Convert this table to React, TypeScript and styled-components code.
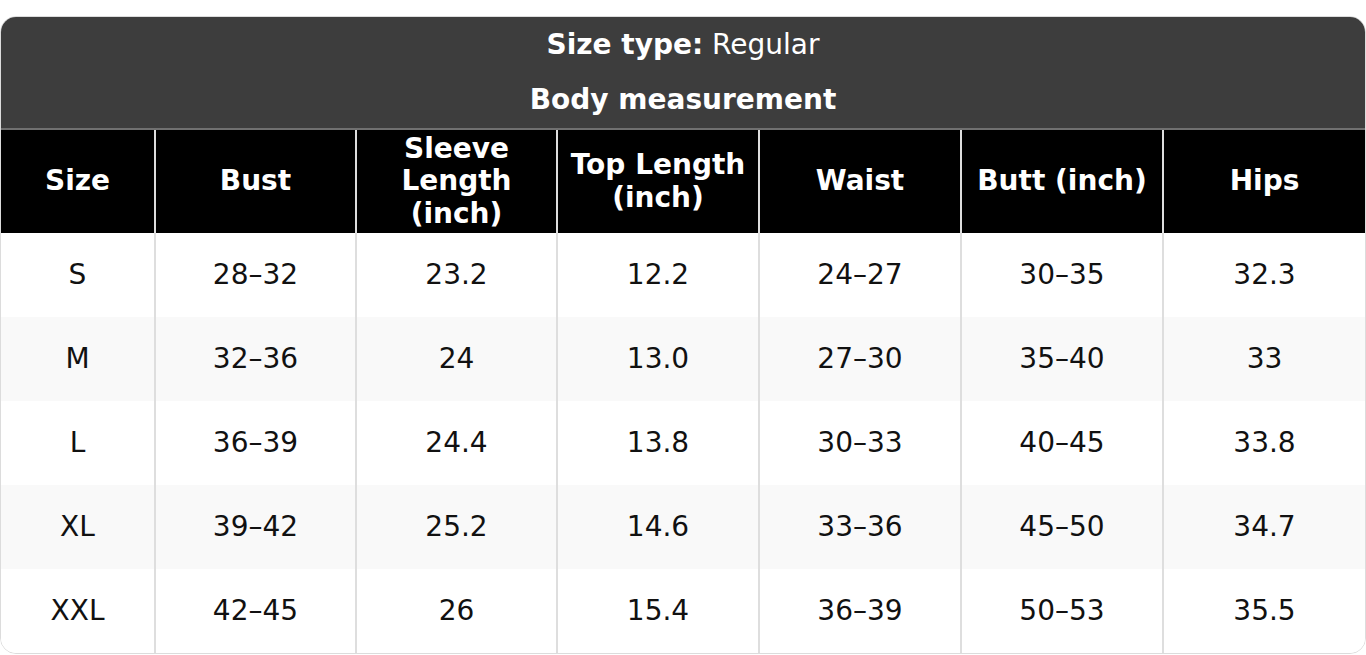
import React from "react";
import styled, { createGlobalStyle } from "styled-components";

const Global = createGlobalStyle`
  html, body { margin: 0; padding: 0; background: #fff; }
  body { font-family: "DejaVu Sans", "Liberation Sans", sans-serif; }
`;

const Page = styled.div`
  padding-top: 16px;
`;

const Card = styled.div`
  width: 1366px;
  box-sizing: border-box;
  border: 1px solid #dcdcdc;
  border-radius: 16px;
  overflow: hidden;
  background: #fff;
`;

const Banner = styled.div`
  background: #3d3d3d;
  color: #fff;
  font-size: 28px;
  border-bottom: 2px solid #707070;
  display: grid;
  grid-template-rows: 54px 57px;
`;

const BannerLine = styled.div<{ $bold?: boolean }>`
  display: flex;
  align-items: center;
  justify-content: center;
  font-weight: ${(p) => (p.$bold ? 700 : 400)};
  b { font-weight: 700; }
`;

const Row = styled.div<{ $head?: boolean; $alt?: boolean }>`
  display: grid;
  grid-template-columns: 153px 201px 201px 202px 202px 202px 1fr;
  height: ${(p) => (p.$head ? "103px" : "84px")};
  background: ${(p) => (p.$head ? "#000" : p.$alt ? "#f9f9f9" : "#fff")};
  color: ${(p) => (p.$head ? "#fff" : "#111")};
  font-weight: ${(p) => (p.$head ? 700 : 400)};
  font-size: 28px;
`;

const Cell = styled.div<{ $head?: boolean }>`
  display: flex;
  align-items: center;
  justify-content: center;
  text-align: center;
  line-height: 1.16;
  padding: 0 6px;
  & + & {
    border-left: 2px solid ${(p) => (p.$head ? "#6e6e6e" : "#dedede")};
  }
`;

const headers = ["Size", "Bust", "Sleeve Length (inch)", "Top Length (inch)", "Waist", "Butt (inch)", "Hips"];

const rows = [
  ["S", "28–32", "23.2", "12.2", "24–27", "30–35", "32.3"],
  ["M", "32–36", "24", "13.0", "27–30", "35–40", "33"],
  ["L", "36–39", "24.4", "13.8", "30–33", "40–45", "33.8"],
  ["XL", "39–42", "25.2", "14.6", "33–36", "45–50", "34.7"],
  ["XXL", "42–45", "26", "15.4", "36–39", "50–53", "35.5"],
];

export default function App() {
  return (
    <>
      <Global />
      <Page>
        <Card>
          <Banner>
            <BannerLine>
              <span>
                <b>Size type:</b> Regular
              </span>
            </BannerLine>
            <BannerLine $bold>Body measurement</BannerLine>
          </Banner>
          <Row $head>
            {headers.map((h) => (
              <Cell $head key={h}>
                {h}
              </Cell>
            ))}
          </Row>
          {rows.map((r, i) => (
            <Row key={r[0]} $alt={i % 2 === 1}>
              {r.map((c, j) => (
                <Cell key={j}>{c}</Cell>
              ))}
            </Row>
          ))}
        </Card>
      </Page>
    </>
  );
}
